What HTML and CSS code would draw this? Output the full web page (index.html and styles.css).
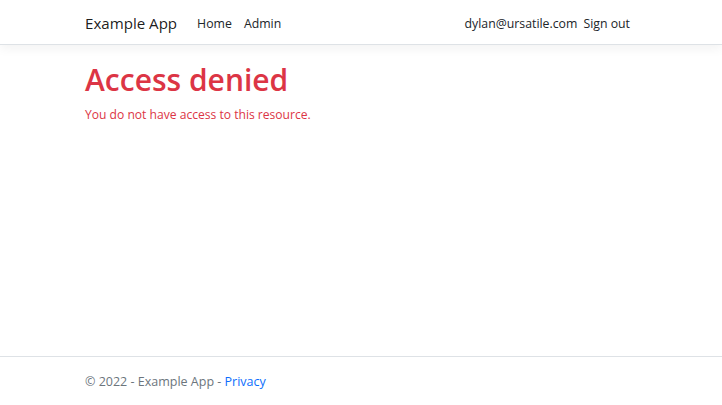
FILE: index.html
```html
<!DOCTYPE html>
<html lang="en">
<head>
<meta charset="utf-8">
<title>Access denied - Example App</title>
<link rel="stylesheet" href="styles.css">
</head>
<body>
<div class="page">
  <header class="site-header">
    <nav class="navbar">
      <div class="container nav-inner">
        <a class="brand" href="#">Example App</a>
        <ul class="nav-list grow">
          <li><a class="nav-link" href="#">Home</a></li>
          <li><a class="nav-link" href="#">Admin</a></li>
        </ul>
        <ul class="nav-list nav-right">
          <li><span class="nav-text">dylan@ursatile.com</span></li>
          <li><a class="nav-link" href="#">Sign out</a></li>
        </ul>
      </div>
    </nav>
  </header>
  <main class="container main">
    <h1 class="title">Access denied</h1>
    <p class="message">You do not have access to this resource.</p>
  </main>
  <footer class="site-footer">
    <div class="container footer-inner">
      &copy; 2022 - Example App - <a class="footer-link" href="#">Privacy</a>
    </div>
  </footer>
</div>
</body>
</html>
```
FILE: styles.css
```css
html, body {
  margin: 0;
  padding: 0;
  background: #fff;
}
body {
  font-family: "Open Sans", "Noto Sans", sans-serif;
  font-size: 14px;
  color: #212529;
}
.page {
  min-height: 405px;
  display: flex;
  flex-direction: column;
}
.container {
  width: 552px;
  margin: 0 auto;
}
.site-header {
  margin-bottom: 14px;
}
.navbar {
  height: 44px;
  border-bottom: 1px solid #dee2e6;
  box-shadow: 0 4px 10px rgba(0, 0, 0, 0.05);
  background: #fff;
}
.nav-inner {
  height: 100%;
  display: flex;
  align-items: center;
  padding-top: 2px;
  box-sizing: border-box;
}
.brand {
  font-size: 15.1px;
  color: rgba(0, 0, 0, 0.9);
  text-decoration: none;
  margin-right: 14px;
}
.nav-list {
  list-style: none;
  margin: 0;
  padding: 0;
  display: flex;
}
.grow {
  flex: 1;
}
.nav-right {
  margin-right: 1px;
}
.nav-link {
  display: block;
  padding: 0 6px;
  font-size: 12.3px;
  color: #212529;
  text-decoration: none;
}
.nav-text {
  display: block;
  font-size: 12.3px;
  color: #212529;
}
.main {
  flex: 1;
}
.title {
  margin: 0 0 8px;
  padding-top: 3px;
  font-size: 30px;
  font-weight: 600;
  line-height: 1.2;
  color: #dc3545;
}
.message {
  margin: 0;
  font-size: 12.1px;
  color: #dc3545;
}
.site-footer {
  border-top: 1px solid #dee2e6;
  height: 48px;
}
.footer-inner {
  line-height: 50px;
  font-size: 12.5px;
  color: #6c757d;
  white-space: nowrap;
}
.footer-link {
  color: #0d6efd;
  text-decoration: none;
}
```
